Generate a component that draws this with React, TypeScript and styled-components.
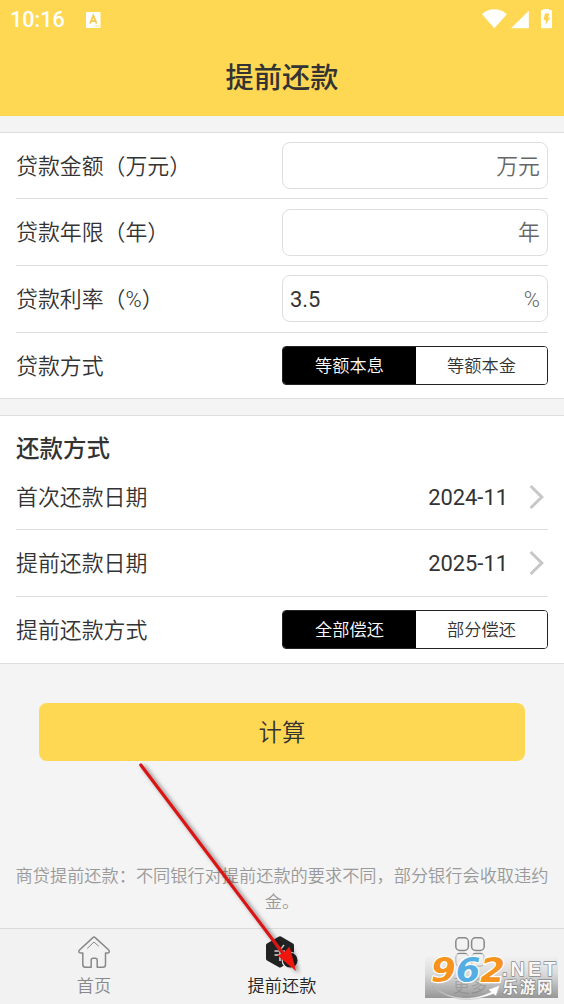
import React, { useState } from 'react';
import styled, { createGlobalStyle } from 'styled-components';

const Global = createGlobalStyle`
  *, *::before, *::after { box-sizing: border-box; }
  body {
    margin: 0;
    background: #f4f4f4;
    color: #333;
    font-family: Roboto, "Noto Sans CJK SC", sans-serif;
    font-weight: 350;
  }
  button, input { font: inherit; color: inherit; }
`;

const Screen = styled.div`
  position: relative;
  display: flex;
  flex-direction: column;
  width: 564px;
  height: 1004px;
  overflow: hidden;
  background: #f4f4f4;
`;

const Header = styled.header`
  height: 116px;
  flex: none;
  background: #fed853;
`;

const StatusBar = styled.div`
  display: flex;
  align-items: center;
  height: 40px;
  padding: 0 10px;
  color: #fff;
  font-size: 21.6px;
  line-height: 40px;
  font-weight: 500;
`;

const Clock = styled.span`
  width: 76px;
`;

const StatusIcons = styled.div`
  display: flex;
  margin-left: auto;
  margin-right: 1px;
`;

const Title = styled.h1`
  margin: 0;
  height: 76px;
  line-height: 78px;
  text-align: center;
  font-size: 28.2px;
  font-weight: 500;
`;

const Section = styled.section<{ $gap: number; $bottom?: number }>`
  flex: none;
  margin-top: ${p => p.$gap}px;
  padding: 0 16px ${p => p.$bottom ?? 0}px;
  background: #fff;
  border-top: 1px solid #dedede;
  border-bottom: 1px solid #dedede;
`;

const SectionTitle = styled.h2`
  margin: 0;
  height: 48px;
  padding-top: 15px;
  line-height: 36px;
  font-size: 23.5px;
  font-weight: 500;
`;

const Row = styled.div<{ $height: number; $last?: boolean; $bottom?: number }>`
  display: flex;
  align-items: center;
  justify-content: space-between;
  height: ${p => p.$height}px;
  padding-bottom: ${p => p.$bottom ?? 0}px;
  border-bottom: ${p => (p.$last ? 'none' : '1px solid #dedede')};
`;

const Label = styled.span`
  padding-top: 2px;
  font-size: 21.9px;
  line-height: 32px;
  white-space: nowrap;
`;

const Field = styled.label`
  display: flex;
  align-items: center;
  width: 266px;
  height: 47px;
  padding: 2px 7px 0;
  border: 1px solid #dedede;
  border-radius: 8px;
  font-size: 21.9px;
  line-height: 32px;
`;

const FieldInput = styled.input`
  flex: 1;
  min-width: 0;
  padding: 0;
  border: 0;
  outline: 0;
  background: none;
  height: 32px;
  font-weight: 400;
`;

const Unit = styled.span`
  color: #666;
`;

const Segments = styled.div`
  display: flex;
  width: 266px;
  height: 39px;
  border: 1px solid #222;
  border-radius: 4px;
  overflow: hidden;
`;

const Segment = styled.button<{ $active: boolean }>`
  flex: ${p => (p.$active ? '0 0 133px' : '1')};
  padding: 2px 0 0;
  border: 0;
  font-size: 17.2px;
  line-height: 35px;
  background: ${p => (p.$active ? '#000' : '#fff')};
  color: ${p => (p.$active ? '#fff' : '#333')};
`;

const DateValue = styled.span`
  display: flex;
  align-items: center;
  gap: 21px;
  padding-right: 4px;
  font-size: 21.9px;
  font-weight: 400;
  line-height: 32px;
`;

const DateText = styled.span`
  padding-top: 2px;
`;

const Calculate = styled.button`
  flex: none;
  width: 486px;
  height: 58px;
  margin: 39px auto 0;
  padding: 2px 0 0;
  border: 0;
  border-radius: 8px;
  background: #fed853;
  font-size: 23.4px;
  line-height: 56px;
`;

const Notice = styled.p`
  margin: 102px 0 0;
  padding: 0 15px;
  color: #999;
  text-align: center;
  font-size: 17.22px;
  line-height: 26px;
`;

const TabBar = styled.nav`
  display: flex;
  height: 76px;
  margin-top: auto;
  flex: none;
  padding-top: 4px;
  background: #f2f2f2;
  border-top: 1px solid #dadada;
`;

const Tab = styled.div<{ $active?: boolean }>`
  flex: 1;
  display: flex;
  flex-direction: column;
  align-items: center;
  color: ${p => (p.$active ? '#222' : '#888')};
  font-size: 17.2px;
  line-height: 26px;

  svg { flex: none; margin-bottom: 2px; }
`;

const ArrowOverlay = styled.svg`
  position: absolute;
  left: 0;
  top: 0;
  pointer-events: none;
`;

const Badge = styled.div`
  position: absolute;
  left: 425px;
  top: 954px;
  width: 133px;
  height: 44px;
  background: linear-gradient(rgba(245, 245, 245, 0.6), rgba(205, 205, 205, 0.65) 45%, rgba(135, 135, 135, 0.85));

  svg { display: block; overflow: visible; }
`;

const Chevron = () => (
  <svg width="15" height="26" viewBox="0 0 15 26" fill="none" stroke="#c7c7c7" strokeWidth="3">
    <path d="M1.6 2 L12.8 13 L1.6 24" />
  </svg>
);

function Toggle({ options }: { options: string[] }) {
  const [selected, setSelected] = useState(0);
  return (
    <Segments>
      {options.map((option, i) => (
        <Segment key={option} $active={i === selected} onClick={() => setSelected(i)}>{option}</Segment>
      ))}
    </Segments>
  );
}

const fields = [
  { label: '贷款金额（万元）', unit: '万元', value: '', height: 66, bottom: 0 },
  { label: '贷款年限（年）', unit: '年', value: '', height: 67, bottom: 0 },
  { label: '贷款利率（%）', unit: '%', value: '3.5', height: 67, bottom: 1 },
];

const dates = [
  { label: '首次还款日期', value: '2024-11', height: 66 },
  { label: '提前还款日期', value: '2025-11', height: 67 },
];

export default function App() {
  return (
    <>
      <Global />
      <Screen>
        <Header>
          <StatusBar>
            <Clock>10:16</Clock>
            <svg width="15" height="17" viewBox="0 0 15 17">
              <rect y="0" width="14.5" height="16" rx="1" fill="#fff" />
              <path d="M4 11.5 7.3 3.5 10.6 11.5M5.2 9.2h4.2" fill="none" stroke="#f6c94a" strokeWidth="1.8" />
              <path d="M8 14h5" stroke="#f2d98a" strokeWidth="1" strokeDasharray="1.4 .5" />
            </svg>
            <StatusIcons>
              <svg width="72" height="22" viewBox="0 0 72 22" fill="#fff">
                <path d="M1 5.2C7.5-1.5 19-1.5 25.8 5.2L13.4 19.3Z" />
                <path d="M47.8 1.8V19.2H30Z" />
                <path d="M62 0h6v1h2q1 0 1 1V18.2q0 1-1 1H61q-1 0-1-1V2q0-1 1-1h1Z" />
                <path d="M64 4.5h4.4L67 8.5h2.2l-4.8 7.5.6-5H62.5Z" fill="#fbd04d" />
              </svg>
            </StatusIcons>
          </StatusBar>
          <Title>提前还款</Title>
        </Header>

        <Section $gap={16}>
          {fields.map(f => (
            <Row key={f.label} $height={f.height} $bottom={f.bottom}>
              <Label>{f.label}</Label>
              <Field>
                <FieldInput defaultValue={f.value} />
                <Unit>{f.unit}</Unit>
              </Field>
            </Row>
          ))}
          <Row $height={65} $last>
            <Label>贷款方式</Label>
            <Toggle options={['等额本息', '等额本金']} />
          </Row>
        </Section>

        <Section $gap={16} $bottom={1}>
          <SectionTitle>还款方式</SectionTitle>
          {dates.map(d => (
            <Row key={d.label} $height={d.height}>
              <Label>{d.label}</Label>
              <DateValue><DateText>{d.value}</DateText><Chevron /></DateValue>
            </Row>
          ))}
          <Row $height={65} $last>
            <Label>提前还款方式</Label>
            <Toggle options={['全部偿还', '部分偿还']} />
          </Row>
        </Section>

        <Calculate>计算</Calculate>
        <Notice>商贷提前还款：不同银行对提前还款的要求不同，部分银行会收取违约金。</Notice>

        <TabBar>
          <Tab>
            <svg width="34" height="38" viewBox="0 0 34 38" fill="none" stroke="#888" strokeWidth="1.5" strokeLinejoin="round" strokeLinecap="round">
              <path d="M15.9 4.6Q17 3.4 18.2 4.6L32 17.2Q33 20 30.5 20H28.5V31.5Q28.5 34.3 25.8 34.3H20.2V27Q20.2 25.2 18.4 25.2H16Q14.2 25.2 14.2 27V34.3H8.5Q5.8 34.3 5.8 31.5V20H3.5Q1 20 2.2 17.2Z" />
              <path d="M10.5 15.2 17 9 21.5 13" strokeWidth="1" />
            </svg>
            首页
          </Tab>
          <Tab $active>
            <svg width="34" height="38" viewBox="0 0 34 38">
              <path d="M14 3.6Q15 3 16 3.6L28 10.5Q29 11.2 29 12.2V26.5L16 34.3Q15 35 14 34.3L2 27.5Q1 26.8 1 25.8V12.2Q1 11.2 2 10.5Z" fill="#222" />
              <path d="M11 12 15 17 19 12M9.5 18H20M9.5 22H20M15 17V28" fill="none" stroke="#ddd" strokeWidth="1.7" />
              <circle cx="25.2" cy="27.2" r="8" fill="#222" stroke="#f2f2f2" strokeWidth="1.2" />
            </svg>
            提前还款
          </Tab>
          <Tab>
            <svg width="34" height="38" viewBox="0 0 34 38" fill="none" stroke="#888" strokeWidth="1.5">
              <rect x="2.8" y="4.8" width="12.6" height="12.6" rx="4" />
              <rect x="18.6" y="4.8" width="12.6" height="12.6" rx="4" />
              <rect x="2.8" y="20.6" width="12.6" height="12.6" rx="4" />
              <rect x="18.6" y="20.6" width="12.6" height="12.6" rx="4" />
            </svg>
            更多
          </Tab>
        </TabBar>

        <Badge>
          <svg width="133" height="44" viewBox="0 0 133 44" fontWeight="700">
            <path d="M7 32Q34 53 66 38L63.5 35.5 75 31 71 42 68.5 40Q32 54 7 32Z" fill="#fff" stroke="#aaa" strokeWidth=".5" />
            <text x="6" y="28" fontFamily="DejaVu Sans, sans-serif" fontStyle="italic" fontSize="33" textLength="74" lengthAdjust="spacingAndGlyphs" stroke="#fff" strokeWidth="2.4" paintOrder="stroke" strokeLinejoin="round">
              <tspan fill="#f7941d">9</tspan><tspan fill="#55aee3">6</tspan><tspan fill="#f7941d">2</tspan>
            </text>
            <g fontFamily="Liberation Sans, Noto Sans CJK SC, sans-serif" fill="#f8f8f8" stroke="#888" strokeWidth="1.4" paintOrder="stroke" strokeLinejoin="round">
              <text x="77" y="22" fontSize="19.5" textLength="54" lengthAdjust="spacing">.NET</text>
              <text x="77.5" y="39.3" fontSize="15.5" textLength="50" lengthAdjust="spacing">乐游网</text>
            </g>
          </svg>
        </Badge>

        <ArrowOverlay width="564" height="1004" viewBox="0 0 564 1004">
          <defs>
            <filter id="arrow-shadow" x="-20%" y="-20%" width="140%" height="140%">
              <feDropShadow dx="3" dy="2" stdDeviation="2" floodColor="#000" floodOpacity=".5" />
            </filter>
          </defs>
          <g filter="url(#arrow-shadow)" fill="#f01410">
            <path d="M140.8 765 285 956" stroke="#d81616" strokeWidth="3.2" strokeLinecap="round" />
            <path d="M296 971 277.5 955.5 283.5 953 289.5 946.5Z" />
          </g>
        </ArrowOverlay>
      </Screen>
    </>
  );
}
